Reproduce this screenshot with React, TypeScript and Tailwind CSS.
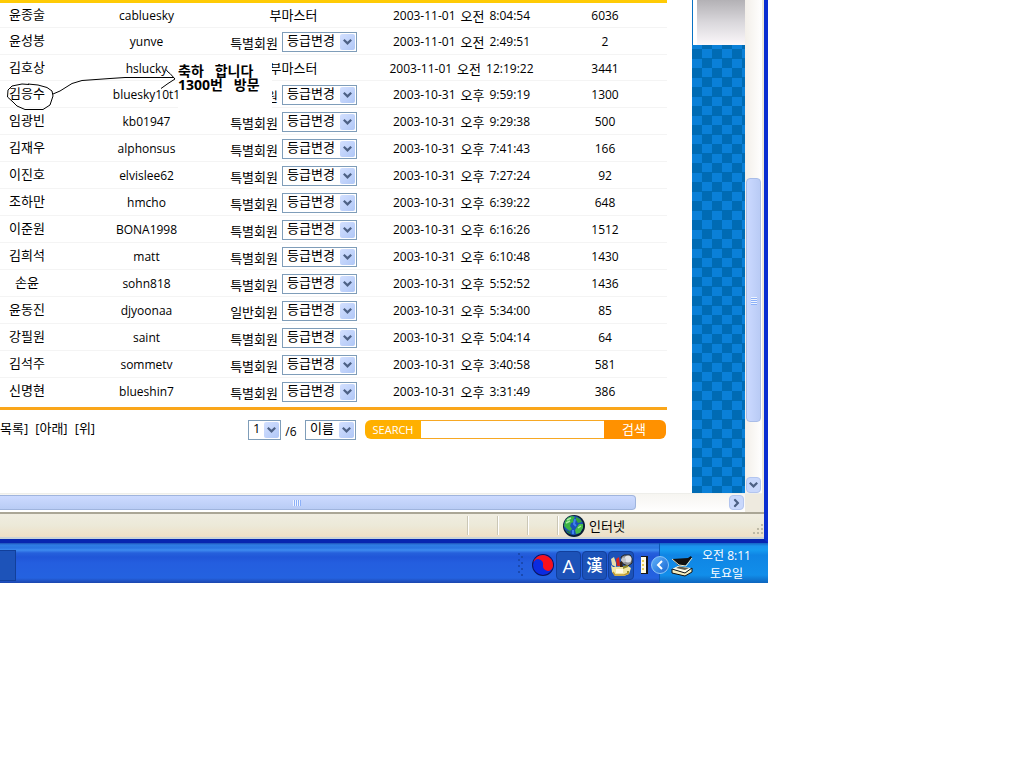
import React from "react";

type Member = {
  name: string;
  id: string;
  level: string;
  fixed?: boolean;
  day: string;
  half: string;
  time: string;
  visits: number;
};

const members: Member[] = [
  { name: "윤종술", id: "cabluesky", level: "부마스터", fixed: true, day: "2003-11-01", half: "오전", time: "8:04:54", visits: 6036 },
  { name: "윤성봉", id: "yunve", level: "특별회원", day: "2003-11-01", half: "오전", time: "2:49:51", visits: 2 },
  { name: "김호상", id: "hslucky", level: "부마스터", fixed: true, day: "2003-11-01", half: "오전", time: "12:19:22", visits: 3441 },
  { name: "김응수", id: "bluesky10t1", level: "원", day: "2003-10-31", half: "오후", time: "9:59:19", visits: 1300 },
  { name: "임광빈", id: "kb01947", level: "특별회원", day: "2003-10-31", half: "오후", time: "9:29:38", visits: 500 },
  { name: "김재우", id: "alphonsus", level: "특별회원", day: "2003-10-31", half: "오후", time: "7:41:43", visits: 166 },
  { name: "이진호", id: "elvislee62", level: "특별회원", day: "2003-10-31", half: "오후", time: "7:27:24", visits: 92 },
  { name: "조하만", id: "hmcho", level: "특별회원", day: "2003-10-31", half: "오후", time: "6:39:22", visits: 648 },
  { name: "이준원", id: "BONA1998", level: "특별회원", day: "2003-10-31", half: "오후", time: "6:16:26", visits: 1512 },
  { name: "김희석", id: "matt", level: "특별회원", day: "2003-10-31", half: "오후", time: "6:10:48", visits: 1430 },
  { name: "손윤", id: "sohn818", level: "특별회원", day: "2003-10-31", half: "오후", time: "5:52:52", visits: 1436 },
  { name: "윤동진", id: "djyoonaa", level: "일반회원", day: "2003-10-31", half: "오후", time: "5:34:00", visits: 85 },
  { name: "강필원", id: "saint", level: "특별회원", day: "2003-10-31", half: "오후", time: "5:04:14", visits: 64 },
  { name: "김석주", id: "sommetv", level: "특별회원", day: "2003-10-31", half: "오후", time: "3:40:58", visits: 581 },
  { name: "신명현", id: "blueshin7", level: "특별회원", day: "2003-10-31", half: "오후", time: "3:31:49", visits: 386 },
];

function Chevron({ className }: { className: string }) {
  return (
    <svg viewBox="0 0 9 6" className={className} aria-hidden="true">
      <path d="M0.8 0.8 L4.5 4.4 L8.2 0.8" fill="none" stroke="#4d6185" strokeWidth="2.2" />
    </svg>
  );
}

function Dropdown({ label, option, className }: { label: string; option: string; className: string }) {
  return (
    <span className={`inline-grid h-5 grid-cols-1 grid-rows-1 border border-[#7f9db9] bg-white ${className}`}>
      <select
        aria-label={label}
        className="col-start-1 row-start-1 w-full appearance-none bg-transparent pb-1 pl-1 text-[13px] leading-3.5 outline-none"
      >
        <option>{option}</option>
      </select>
      <span className="pointer-events-none col-start-1 row-start-1 mr-px flex h-4 w-[15px] items-center justify-center self-center justify-self-end rounded-xs bg-linear-to-br from-[#d3e0ff] to-[#b0c7f6]">
        <Chevron className="h-1.5 w-[9px]" />
      </span>
    </span>
  );
}

function MemberTable() {
  return (
    <table className="w-full table-fixed border-separate border-spacing-0 border-t-3 border-b-3 border-t-[#ffcb05] border-b-[#faa61a] pb-0.5 text-center">
      <colgroup>
        <col className="w-[86px]" />
        <col className="w-[121px]" />
        <col className="w-[173px]" />
        <col className="w-[163px]" />
        <col />
      </colgroup>
      <tbody className="[&_td]:h-[27px] [&_td]:border-b [&_td]:border-[#f4f4f4] [&_td]:p-0 [&_td]:pt-0.5 [&>tr:first-child>td]:h-[25px] [&>tr:last-child>td]:border-transparent [&>tr:nth-child(3)>td]:h-[26px]">
        {members.map((m) => (
          <tr key={m.id}>
            <td>
              <div className="pr-8 pb-1 text-[13px] leading-4">{m.name}</div>
            </td>
            <td>{m.id}</td>
            <td>
              {m.fixed ? (
                <div className="pb-0.5 text-[13px] leading-4">{m.level}</div>
              ) : (
                <div className="flex h-5 items-end justify-center gap-1 text-[13px]">
                  <span className="w-12 text-right leading-[18px] whitespace-nowrap">{m.level}</span>
                  <Dropdown label={`${m.name} 등급변경`} option="등급변경" className="w-[75px]" />
                </div>
              )}
            </td>
            <td>
              <div className="flex justify-center gap-[5px] whitespace-nowrap">
                <span>{m.day}</span>
                <span className="text-[13px]">{m.half}</span>
                <span>{m.time}</span>
              </div>
            </td>
            <td>{m.visits}</td>
          </tr>
        ))}
      </tbody>
    </table>
  );
}

function Annotation() {
  return (
    <>
      <p className="absolute top-[58px] left-[178px] h-[51px] w-[94px] bg-white pt-1.5 text-[14px] leading-[14px] font-bold whitespace-nowrap">
        축하&nbsp;&nbsp; 합니다
        <br />
        1300번&nbsp;&nbsp; 방문
      </p>
      <svg className="pointer-events-none absolute top-[60px] left-0 h-[55px] w-[180px]" viewBox="0 60 180 55" fill="none" stroke="#000" strokeWidth="1" aria-hidden="true">
        <path d="M29 84.5 L22 84 L12 86 L8 90 L7.5 97 L13 102 L17 106 L25 109.5 L43 109.5 L50 105 L53 96 L52 91 L47 87.5 L38 85 L28 84 M53 94 L60 91 L72 83.5 L82 80.5 L110 78.5 L125 77.5 L174 77.5 M166 69.5 L168 72 L170 73.5 L175 79 L168 83.5 L161 88.5" />
      </svg>
    </>
  );
}

function Footer() {
  return (
    <div className="flex justify-between pt-2.5 pr-px pb-[53px]">
      <nav className="flex gap-[7px] text-[13px] leading-4 whitespace-nowrap">
        <a href="#list">목록]</a>
        <a href="#down">[아래]</a>
        <a href="#up">[위]</a>
      </nav>
      <form className="flex" onSubmit={(e) => e.preventDefault()}>
        <Dropdown label="페이지" option="1" className="w-[33px]" />
        <span className="w-6 pt-1 pr-1 text-center leading-4">/6</span>
        <Dropdown label="검색 항목" option="이름" className="w-[51px]" />
        <div className="ml-[9px] flex h-[19px]">
          <label htmlFor="q" className="w-14 rounded-l-md bg-[#ffb000] text-center text-[11px] leading-[19px] text-white">
            SEARCH
          </label>
          <input id="q" className="w-[183px] border-y border-[#f7a823] bg-white px-1 outline-none" />
          <button className="w-[62px] rounded-r-md bg-[#ff9100] pr-0.5 pb-0.5 text-[13px] leading-4 text-white">검색</button>
        </div>
      </form>
    </div>
  );
}

function VerticalScrollbar() {
  return (
    <div className="flex w-[17px] flex-col items-center bg-linear-to-r from-[#f3efe9] to-white">
      <div className="h-[178px]" />
      <div className="flex h-[244px] w-[15px] flex-col items-center justify-center gap-px rounded-sm border border-[#a9bde8] bg-linear-to-r from-[#cbd9ff] to-[#b9cbf5]">
        {[0, 1, 2, 3].map((i) => (
          <span key={i} className="h-px w-1.5 bg-[#eef4fe] shadow-[0_1px_0_#8cb0f8]" />
        ))}
      </div>
      <button aria-label="아래로" className="mt-auto flex h-4 w-[15px] items-center justify-center rounded-sm border border-[#b3c5ef] bg-[#c9d8fc]">
        <Chevron className="h-1.5 w-[9px]" />
      </button>
    </div>
  );
}

function HorizontalScrollbar() {
  return (
    <div className="flex h-[19px] border-t border-[#eeeeea]">
      <div className="flex flex-1 items-center justify-between bg-linear-to-b from-[#f6f5f1] to-white pr-px pb-px">
        <div className="flex h-[15px] w-[85.5%] items-center rounded-r-sm border border-l-0 border-[#9fb4dd] bg-linear-to-b from-[#ccdaff] to-[#b9ccf5] pl-[293px] shadow-[0_1px_0_white]">
          {[0, 1, 2, 3].map((i) => (
            <span key={i} className="mr-px h-1.5 w-px bg-[#eef4fe] shadow-[1px_0_0_#8cb0f8]" />
          ))}
        </div>
        <button aria-label="오른쪽으로" className="flex h-[15px] w-[15px] items-center justify-center rounded-sm border border-[#b3c5ef] bg-[#c9d8fc]">
          <Chevron className="h-1.5 w-[9px] -rotate-90" />
        </button>
      </div>
      <div className="w-[17px] bg-[#eeeadf]" />
    </div>
  );
}

function StatusBar() {
  return (
    <div className="flex h-[27px] items-stretch border-t-2 border-[#aaa696] border-b-2 border-b-[#c9d3d8] bg-linear-to-b from-[#f0ede1] via-[#ece9d8] to-[#eedfc5]">
      <div className="flex-1" />
      {[0, 1, 2].map((i) => (
        <div key={i} className="my-0.5 w-[30px] border-l border-[#cbc7b6] shadow-[inset_1px_0_0_white]" />
      ))}
      <div className="my-0.5 flex w-[207px] items-center border-l border-[#cbc7b6] pl-[5px] shadow-[inset_1px_0_0_white]">
        <svg viewBox="0 0 22 22" className="size-[22px] shrink-0" aria-hidden="true">
          <circle cx="11" cy="11" r="11" fill="#0a1c33" />
          <circle cx="10.5" cy="10.5" r="9.7" fill="#1a50b8" />
          <path d="M1 11 L2 6 L5 2.5 L9 1 L12 2 L10 5 L11 7 L8 8 L7 11 L9 14 L7 16 L4 14z" fill="#3cb344" />
          <path d="M13 2 L17 4 L19 7 L15 8 L13 5z" fill="#37a043" />
          <path d="M16 9 L20 9 L20 13 L17 18 L13 19 L12 15 L14 12z" fill="#45bb49" />
          <path d="M3 15 L7 17 L8 19 L5 18z" fill="#1f7c33" />
          <path d="M4 5 L8 3 M3 8 L7 6 M15 13 L18 11" stroke="#a8eaa0" strokeWidth="1.5" />
          <path d="M12 4 L11 9 L13 11 M10 15 L10 19" stroke="#3f83ee" strokeWidth="2" fill="none" />
        </svg>
        <span className="pl-1 text-[13px] leading-4">인터넷</span>
        <svg viewBox="0 0 11 11" className="mt-auto ml-auto size-[11px]" fill="#bdb9a6" aria-hidden="true">
          <path d="M8 0h2v2h-2z M4 4h2v2h-2z M8 4h2v2h-2z M0 8h2v2h-2z M4 8h2v2h-2z M8 8h2v2h-2z" />
        </svg>
      </div>
    </div>
  );
}

function Taskbar() {
  return (
    <div className="flex h-10 items-stretch bg-[linear-gradient(#1c50b8_0,#2f7de4_2px,#2b76e3_5px,#3e8cf0_7px,#2660dc_10px,#2056d8_14px,#245edf_20px,#2462e0_35px,#1c46ae_40px)]">
      <div className="mt-[7px] mb-0.5 w-4 border border-l-0 border-[#123f9a] bg-[#1d53b9]" />
      <div className="flex-1" />
      <svg viewBox="0 0 6 28" className="mt-2 mr-2 h-7 w-1.5" fill="#1a49b0" aria-hidden="true">
        <path d="M0 2h2v2h-2z M3 5h2v2h-2z M0 8h2v2h-2z M3 11h2v2h-2z M0 14h2v2h-2z M3 17h2v2h-2z M0 20h2v2h-2z M3 23h2v2h-2z" />
      </svg>
      <svg viewBox="0 0 22 22" className="mt-[11px] mr-0.5 size-[22px]" aria-hidden="true">
        <circle cx="11" cy="11" r="11" fill="#0a1560" />
        <circle cx="11" cy="11" r="10" fill="#0b2be0" />
        <path d="M1 11 A10 10 0 0 1 21 11 A5 5 0 0 1 11 11 A5 5 0 0 0 1 11z" fill="#f8101c" transform="rotate(10 11 11)" />
      </svg>
      <div className="mt-2 mb-[3px] flex gap-px text-center text-white">
        <button className="w-[25px] rounded-sm border border-[#123f9c] bg-[#1c52b8] text-[19px] leading-[26px]">A</button>
        <button className="w-[25px] rounded-sm border border-[#123f9c] bg-[#1c52b8] text-[16px] leading-[25px] font-medium">漢</button>
        <button aria-label="입력 도구" className="flex w-[26px] items-center justify-center rounded-sm border border-[#123f9c] bg-[#1c52b8]">
          <svg viewBox="0 0 23 23" className="size-[23px]" aria-hidden="true">
            <path d="M11 3 L14 1 L20 1 L22 4 L22 9 L18 12 L13 10z" fill="#8f9196" stroke="#222" />
            <circle cx="18" cy="5" r="3.5" fill="#dfe2e6" />
            <circle cx="13.5" cy="6" r="2.5" fill="#c4c6c9" />
            <path d="M1 11 L3 13 L18 12 L21 14 L19 20 L14 22 L5 22 L2 18z" fill="#f4e9a4" />
            <path d="M1 5 L4 3 L6 9 L6 13 L2 11z" fill="#e9dfae" />
            <path d="M6 5 L9 3 L10 12 L7 12z" fill="#d8231d" />
            <path d="M10 8 L12 7 L13 13 L10 13z" fill="#3a2414" />
            <path d="M6 15 h7 v4 h-7z" fill="#fffbe2" />
            <path d="M13 12 l5 -1 v2 l-5 2z M17 17h2v2h-2z" fill="#8f8b31" />
            <path d="M3 18 L5 21 L14 21 L19 19" stroke="#c09b30" strokeWidth="1.5" fill="none" />
          </svg>
        </button>
      </div>
      <svg viewBox="0 0 9 20" className="mt-3 ml-1.5 h-5 w-[9px]" aria-hidden="true">
        <path d="M1 1h7v18h-7z" fill="#171717" />
        <path d="M1 2h5v16h-5z" fill="#fffbe2" />
        <path d="M2 5h2v2h-2z M2 9h2v2h-2z M2 13h2v2h-2z" fill="#e7cf55" />
      </svg>
      <div className="ml-2.5 flex w-[109px] items-center border-l border-[#0d57b5] bg-[linear-gradient(#1663c4_0,#1b93ee_3px,#159bf0_7px,#0f85e4_12px,#118eea_32px,#0d65be_40px)]">
        <button aria-label="숨겨진 아이콘 표시" className="mt-1 -ml-[9px] flex size-[18px] shrink-0 items-center justify-center rounded-full border border-[#8cc4f7] bg-linear-to-br from-[#5fb1fa] to-[#1766d2]">
          <svg viewBox="0 0 8 10" className="h-2.5 w-2" aria-hidden="true">
            <path d="M6 1 L2 5 L6 9" fill="none" stroke="#fff" strokeWidth="2" />
          </svg>
        </button>
        <svg viewBox="0 0 22 21" className="mt-1.5 ml-0.5 h-[21px] w-[22px] shrink-0" aria-hidden="true">
          <path d="M1 3 L17 2 L20 0 L21 2 L14 10 L7 9z" fill="#111" />
          <path d="M1 3 L8 9 L15 10 L21 2" fill="none" stroke="#ece9c9" />
          <path d="M1 13 L7 10 L20 12 L14 17z" fill="#fffce9" />
          <path d="M1 13 V17 L14 20 L21 16 V12 L14 17z" fill="#f6eebf" stroke="#111" />
          <path d="M5 12 L8 10.5 L18 12 L14 14z" fill="#5f5c4d" />
        </svg>
        <div className="ml-[9px] pt-1 text-center leading-[18px] whitespace-nowrap text-white">
          오전 8:11
          <br />
          토요일
        </div>
      </div>
    </div>
  );
}

export default function App() {
  return (
    <main className="min-h-screen bg-white">
      <div className="w-3/4 min-w-[768px] overflow-hidden font-['Open_Sans','Noto_Sans_CJK_KR',sans-serif] text-[12px] leading-4 text-black">
        <section className="border-r-4 border-b-4 border-r-[#0a2fd0] border-b-[#0826b0]">
          <div className="border-r-2 border-[#ece9d8]">
            <div className="flex">
              <div className="relative min-w-0 flex-1 pr-[25px]">
                <MemberTable />
                <Footer />
                <Annotation />
              </div>
              <aside className="flex w-[53px] flex-col">
                <div className="h-[45px] border-l border-[#0872c4] pl-1">
                  <div className="h-full bg-linear-to-b from-[#b3b1b5] via-[#dad8dc] to-[#fbf7fa]" />
                </div>
                <div className="flex-1 bg-[repeating-conic-gradient(#0a80d8_0_25%,#006bb4_0_50%)] bg-[length:20px_19px] bg-[position:0_4px]" />
              </aside>
              <VerticalScrollbar />
            </div>
            <HorizontalScrollbar />
          </div>
          <StatusBar />
        </section>
        <Taskbar />
      </div>
    </main>
  );
}
